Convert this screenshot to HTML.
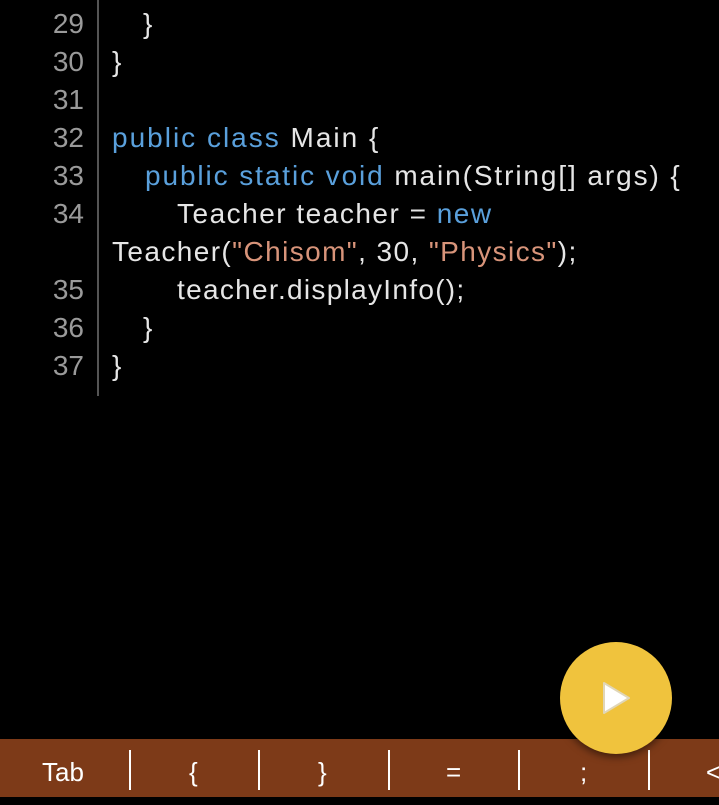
<!DOCTYPE html>
<html><head><meta charset="utf-8"><style>
body{margin:0;width:719px;height:805px;background:#000;overflow:hidden;position:relative;font-family:"Liberation Sans",sans-serif;}
.gut{position:absolute;left:97px;top:0;width:2px;height:396px;background:#555;}
.ln{position:absolute;left:0;width:84px;text-align:right;color:#9a9a9a;font-size:28px;line-height:38px;}
.c{position:absolute;left:112px;color:#e6e6e6;font-size:28px;line-height:38px;white-space:pre;letter-spacing:1.3px;}
.k{color:#5aa0dc}.s{color:#d8947a}
.bar{position:absolute;left:0;top:739px;width:719px;height:58px;background:#7d3a18;}
.bar span{position:absolute;top:0;line-height:66px;color:#fff;font-size:26px;}
.sep{position:absolute;top:11px;width:2px;height:40px;background:#fff;}
.fab{position:absolute;left:560px;top:642px;width:112px;height:112px;border-radius:50%;background:#f0c33d;box-shadow:0 3px 8px rgba(0,0,0,.5);}
</style></head><body>
<div class="gut"></div>
<div class="ln" style="top:5px">29</div><div class="c" style="top:5px;left:143px">}</div>
<div class="ln" style="top:43px">30</div><div class="c" style="top:43px">}</div>
<div class="ln" style="top:81px">31</div>
<div class="ln" style="top:119px">32</div><div class="c" style="top:119px;letter-spacing:2px"><span class="k">public class</span> Main {</div>
<div class="ln" style="top:157px">33</div><div class="c" style="top:157px;left:145px;letter-spacing:1.9px"><span class="k">public static void</span> main(String[] args) {</div>
<div class="ln" style="top:195px">34</div><div class="c" style="top:195px;left:177px;letter-spacing:1.5px">Teacher teacher = <span class="k">new</span></div>
<div class="c" style="top:233px;letter-spacing:1.4px">Teacher(<span class="s">"Chisom"</span>, 30, <span class="s">"Physics"</span>);</div>
<div class="ln" style="top:271px">35</div><div class="c" style="top:271px;left:177px">teacher.displayInfo();</div>
<div class="ln" style="top:309px">36</div><div class="c" style="top:309px;left:143px">}</div>
<div class="ln" style="top:347px">37</div><div class="c" style="top:347px">}</div>
<div class="bar">
<span style="left:42px">Tab</span><div class="sep" style="left:129px"></div>
<span style="left:189px">{</span><div class="sep" style="left:258px"></div>
<span style="left:318px">}</span><div class="sep" style="left:388px"></div>
<span style="left:446px">=</span><div class="sep" style="left:518px"></div>
<span style="left:580px">;</span><div class="sep" style="left:648px"></div>
<span style="left:706px">&lt;</span>
</div>
<div class="fab"><svg width="112" height="112"><polygon points="44,41 44,71 69,56" fill="#fff" stroke="#e0d6b8" stroke-width="2" stroke-linejoin="round"/></svg></div>
</body></html>
